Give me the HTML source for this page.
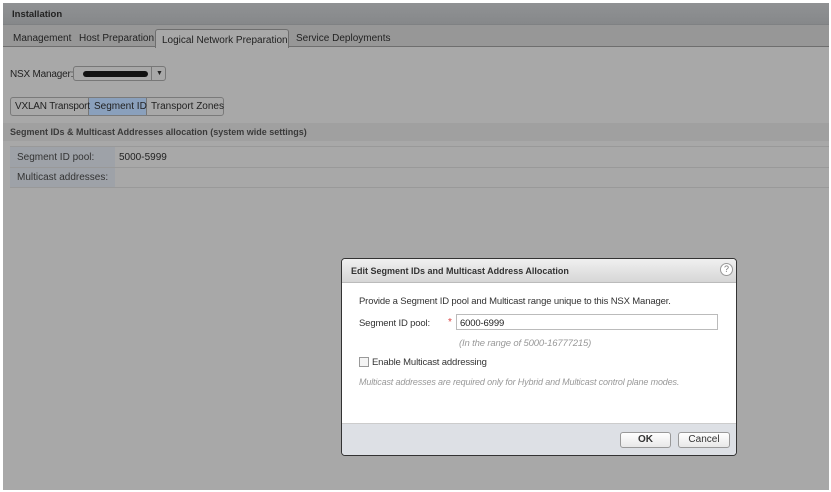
<!DOCTYPE html>
<html><head><style>
*{margin:0;padding:0;box-sizing:border-box}
body{width:831px;height:492px;background:#fff;position:relative;overflow:hidden;font-family:"Liberation Sans",Arial,sans-serif;font-size:10px;color:#222}
.a{position:absolute;white-space:nowrap}
#pg{left:3px;top:3px;width:826px;height:487px;background:#a8a8a8}
.d{font-size:9.5px;letter-spacing:-0.15px}
</style></head><body>
<div class="a" style="left:0;top:0;width:831px;height:3px;background:#fff"></div>
<div class="a" id="pg"></div>
<div class="a" style="left:3px;top:3px;width:826px;height:22px;background:linear-gradient(#909294,#86888a);border-bottom:1px solid #7f8183"></div>
<div class="a" style="left:12px;top:9px;font-weight:bold;font-size:9.5px;color:#222">Installation</div>
<div class="a" style="left:3px;top:25px;width:826px;height:22px;background:#979797;border-bottom:1px solid #6e6e6e"></div>
<div class="a" style="left:13px;top:33px">Management</div>
<div class="a" style="left:79px;top:33px">Host Preparation</div>
<div class="a" style="left:155px;top:29px;width:134px;height:19px;background:#a8a8a8;border:1px solid #6e6e6e;border-bottom:none;border-radius:3px 3px 0 0"></div>
<div class="a" style="left:162px;top:35px">Logical Network Preparation</div>
<div class="a" style="left:296px;top:33px">Service Deployments</div>
<div class="a" style="left:10px;top:69px;letter-spacing:-0.2px">NSX Manager:</div>
<div class="a" style="left:73px;top:66px;width:93px;height:15px;background:#a8a8a8;border:1px solid #777;border-radius:3px"></div>
<div class="a" style="left:83px;top:71px;width:65px;height:6px;background:#111;border-radius:3px"></div>
<div class="a" style="left:151px;top:67px;width:1px;height:13px;background:#777"></div>
<div class="a" style="left:156px;top:70px;font-size:7px">▼</div>
<div class="a" style="left:10px;top:97px;width:214px;height:19px;border:1px solid #7a7a7a;border-radius:3px;background:#a8a8a8"></div>
<div class="a" style="left:88px;top:98px;width:59px;height:17px;background:#8aa0bc;border-left:1px solid #777;border-right:1px solid #777"></div>
<div class="a" style="left:15px;top:101px;letter-spacing:-0.2px">VXLAN Transport</div>
<div class="a" style="left:94px;top:101px">Segment ID</div>
<div class="a" style="left:151px;top:101px">Transport Zones</div>
<div class="a" style="left:3px;top:123px;width:826px;height:18px;background:#a0a0a0"></div>
<div class="a" style="left:10px;top:127px;font-weight:bold;font-size:9px;color:#3a3a3a">Segment IDs &amp; Multicast Addresses allocation (system wide settings)</div>
<div class="a" style="left:10px;top:146px;width:819px;height:1px;background:#999"></div>
<div class="a" style="left:10px;top:147px;width:105px;height:40px;background:#9ea2a8"></div>
<div class="a" style="left:10px;top:167px;width:819px;height:1px;background:#999"></div>
<div class="a" style="left:10px;top:187px;width:819px;height:1px;background:#999"></div>
<div class="a" style="left:17px;top:152px;color:#333">Segment ID pool:</div>
<div class="a" style="left:119px;top:152px;color:#222">5000-5999</div>
<div class="a" style="left:17px;top:172px;color:#333">Multicast addresses:</div>

<div class="a" style="left:341px;top:258px;width:396px;height:198px;border:1px solid #333;border-radius:4px;background:#fff;overflow:hidden">
 <div class="a" style="left:0;top:0;width:394px;height:24px;background:linear-gradient(#f0f0f0,#d6d6d6);border-bottom:1px solid #bbb"></div>
 <div class="a" style="left:9px;top:7px;font-weight:bold;font-size:9px;color:#333">Edit Segment IDs and Multicast Address Allocation</div>
 <div class="a" style="left:378px;top:4px;width:13px;height:13px;border:1px solid #999;border-radius:50%;font-size:9px;text-align:center;line-height:11px;color:#777;background:#fff">?</div>
 <div class="a d" style="left:17px;top:37px;color:#333">Provide a Segment ID pool and Multicast range unique to this NSX Manager.</div>
 <div class="a d" style="left:17px;top:59px;color:#333">Segment ID pool:</div>
 <div class="a" style="left:106px;top:58px;color:#d44;font-size:10px">*</div>
 <div class="a" style="left:114px;top:55px;width:262px;height:16px;border:1px solid #bbb"></div>
 <div class="a d" style="left:118px;top:59px;color:#222">6000-6999</div>
 <div class="a d" style="left:117px;top:79px;color:#999;font-style:italic">(In the range of 5000-16777215)</div>
 <div class="a" style="left:17px;top:98px;width:10px;height:10px;border:1px solid #999;background:#f4f4f4"></div>
 <div class="a d" style="left:30px;top:98px;color:#333">Enable Multicast addressing</div>
 <div class="a" style="left:17px;top:118px;color:#999;font-style:italic;font-size:9px;letter-spacing:-0.15px">Multicast addresses are required only for Hybrid and Multicast control plane modes.</div>
 <div class="a" style="left:0;top:164px;width:394px;height:33px;background:#dde0e5;border-top:1px solid #ccc"></div>
 <div class="a" style="left:278px;top:173px;width:51px;height:16px;border:1px solid #999;border-radius:3px;background:linear-gradient(#fff,#e8e8e8);text-align:center;line-height:14px;font-weight:bold;color:#333">OK</div>
 <div class="a" style="left:336px;top:173px;width:52px;height:16px;border:1px solid #999;border-radius:3px;background:linear-gradient(#fff,#e8e8e8);text-align:center;line-height:14px;color:#333">Cancel</div>
</div>
</body></html>
